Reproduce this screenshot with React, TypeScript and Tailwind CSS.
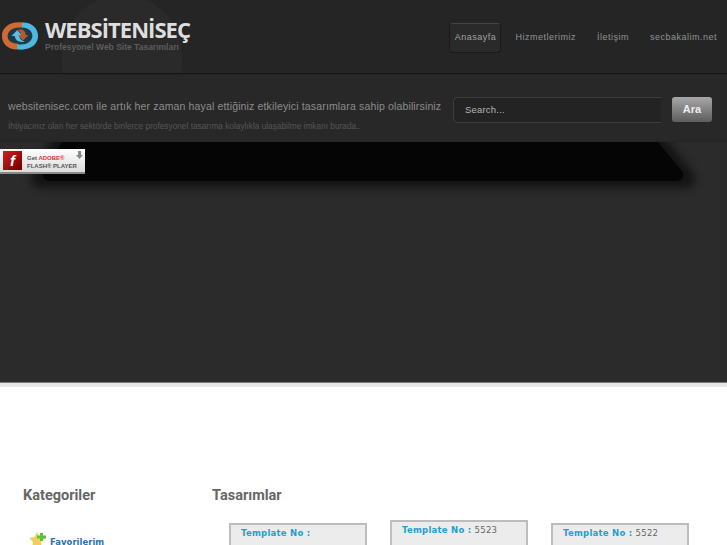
import React from "react";

const Logo = () => (
  <svg width="38" height="30" viewBox="0 0 40 30" className="shrink-0">
    <circle cx="20" cy="15" r="13" fill="#1d3a48" />
    <path d="M23 1 C10 -1 1 6 1 15 C1 24 9 30 18 29 L18 23 C11 23 7 20 7 15 C7 10 12 6 19 6 L23 6 Z" fill="#cf6a35" />
    <path d="M17 29 C30 31 39 24 39 15 C39 6 31 0 22 1 L22 6 C29 6 33 10 33 15 C33 20 28 24 21 24 L17 24 Z" fill="#4db8e0" />
    <path d="M11 15 L17 9 L23 15 L19.5 15 C19.5 18 21 20 25 21 C19 22 15 20 14.5 15 Z" fill="#58c0e6" />
    <path d="M29 14 L23 20 L18 14 L21 14 C21 11 19.5 9.5 16 9 C22 7 26 9 26 14 Z" fill="#b5582a" />
  </svg>
);

const FlashBadge = () => (
  <div className="absolute left-0 top-[149px] z-10 flex h-[25px] w-[85px] border-b-2 border-[#8a8a8a] bg-gradient-to-b from-white to-[#dcdcdc] pl-[3px] pt-[2px]">
    <div className="flex h-[19px] w-[19px] items-center justify-center bg-gradient-to-br from-[#d42020] to-[#6e0000] font-['Liberation_Sans',sans-serif] text-[15px] font-bold italic leading-none text-white">
      f
    </div>
    <div className="ml-[5px] mt-[3px] font-['Liberation_Sans',sans-serif] text-[6px] font-bold leading-[8px] text-[#555]">
      <div>
        Get <span className="text-[#e8333a]">ADOBE®</span>
      </div>
      <div className="whitespace-nowrap">FLASH® PLAYER</div>
    </div>
    <svg width="7" height="9" viewBox="0 0 7 9" className="absolute right-[2px] top-[2px]">
      <path d="M2 0 H5 V4 H7 L3.5 8 L0 4 H2 Z" fill="#888" />
    </svg>
  </div>
);

const Card = ({ no, mt }: { no: string; mt: string }) => (
  <div className={`h-[40px] w-[138px] border-2 border-b-0 border-[#bdbdbd] bg-[#ececec] pl-[10px] pt-[1px] font-['DejaVu_Sans',sans-serif] text-[8.5px] font-bold leading-[14px] tracking-[0.25px] ${mt}`}>
    <span className="text-[#1f9fd0]">Template No : </span>
    <span className="font-normal text-[#666]">{no}</span>
  </div>
);

const navItems = ["Hizmetlerimiz", "İletişim", "secbakalim.net"];

export default function App() {
  return (
    <div className="relative h-[545px] w-[727px] overflow-hidden bg-white font-['Liberation_Sans',sans-serif]">
      <FlashBadge />

      <header className="relative flex h-[74px] items-start justify-between overflow-hidden border-b border-[#161616] bg-[#252525]">
        <div className="absolute left-[62px] top-[-5px] h-[130px] w-[120px] rounded-full bg-[#2a2a2a]" />
        <div className="relative flex items-start pl-[1px] pt-[21px]">
          <Logo />
          <div className="ml-[6px] mt-[-6px]">
            <div className="font-['Open_Sans',sans-serif] text-[22px] font-bold leading-[28px] tracking-[-0.95px] text-[#dedede]">
              WEBSİTENİSEÇ
            </div>
            <div className="mt-[-2px] font-['Liberation_Sans',sans-serif] text-[8.5px] font-bold leading-[12px] text-[#5c5c5c]">
              Profesyonel Web Site Tasarımları
            </div>
          </div>
        </div>
        <nav className="relative flex items-start pt-[23px] font-['Liberation_Sans',sans-serif] text-[9px] tracking-[0.5px] text-[#939393]">
          <div className="flex h-[30px] w-[52px] items-center justify-center rounded-sm border border-[#1a1a1a] border-t-[#444] bg-[#2a2a2a] text-[#a0a0a0]">
            Anasayfa
          </div>
          <div className="flex h-[30px] items-center gap-[21px] pl-[14px] pr-[10px]">
            {navItems.map((n) => (
              <span key={n}>{n}</span>
            ))}
          </div>
        </nav>
      </header>

      <main className="relative h-[308px] overflow-hidden bg-[#2b2b2b]">
        <svg className="absolute left-0 top-0" width="727" height="140" viewBox="0 0 727 140">
          <defs>
            <filter id="sh" x="-10%" y="-30%" width="120%" height="170%">
              <feGaussianBlur stdDeviation="4" />
            </filter>
          </defs>
          <path d="M55 60 H662 L694 100 Q698 112 686 114 H40 Q28 112 32 100 Z" fill="#000" opacity="0.55" filter="url(#sh)" />
          <path d="M67 60 H651 L682 97 Q686 106 676 107 H50 Q40 106 44 97 Z" fill="#050505" />
        </svg>
        <section className="relative flex h-[68px] items-start justify-between border-b border-t border-[#242424] bg-[#282828]">
          <div className="pl-[8px] pt-[24px]">
            <div className="whitespace-nowrap text-[10.5px] leading-[14px] tracking-[0.15px] text-[#8c8c8c]">
              websitenisec.com ile artık her zaman hayal ettiğiniz etkileyici tasarımlara sahip olabilirsiniz
            </div>
            <div className="mt-[7px] whitespace-nowrap text-[8.3px] leading-[12px] text-[#565656]">
              İhtiyacınız olan her sektörde binlerce profesyonel tasarıma kolaylıkla ulaşabilme imkanı burada..
            </div>
          </div>
          <div className="flex items-start gap-[11px] pr-[15px] pt-[22px]">
            <div className="flex h-[26px] w-[208px] items-center rounded-l-[5px] border border-r-0 border-[#3e3e3e] bg-[#232323] pl-[11px] text-[9.5px] tracking-[0.2px] text-[#b4b4b4]">
              Search...
            </div>
            <div className="flex h-[25px] w-[40px] items-center justify-center rounded-[3px] bg-gradient-to-b from-[#a8a8a8] to-[#5e5e5e] text-[11px] font-bold text-[#eee]">
              Ara
            </div>
          </div>
        </section>
      </main>

      <div className="h-[5px] border-t border-[#777] bg-[#e6e6e6]" />

      <section className="flex pt-[100px] font-bold leading-[18px] text-[#666]">
        <aside className="w-[212px] pl-[23px]">
          <h2 className="font-['Roboto',sans-serif] text-[14.5px]">Kategoriler</h2>
          <div className="ml-[6px] mt-[27px] flex items-start gap-[2px]">
            <svg width="19" height="16" viewBox="0 0 19 16" className="shrink-0">
              <path d="M8 0 L10.5 5 L16 6 L12 10 L13 16 L8 13 L3 16 L4 10 L0 6 L5.5 5 Z" fill="#f0cf5a" />
              <path d="M11 1 H14 V3.5 H17 V6.5 H14 V9 H11 V6.5 H8 V3.5 H11 Z" fill="#5cc23c" />
            </svg>
            <span className="mt-[4px] font-['DejaVu_Sans',sans-serif] text-[8.5px] leading-[12px] text-[#2a73b0]">Favorilerim</span>
          </div>
        </aside>
        <div className="flex-1">
          <h2 className="font-['Roboto',sans-serif] text-[14.5px]">Tasarımlar</h2>
          <div className="ml-[17px] mt-[9px] flex items-start gap-[23px]">
            <Card no="" mt="mt-[9px]" />
            <Card no="5523" mt="mt-[6px]" />
            <Card no="5522" mt="mt-[9px]" />
          </div>
        </div>
      </section>
    </div>
  );
}
